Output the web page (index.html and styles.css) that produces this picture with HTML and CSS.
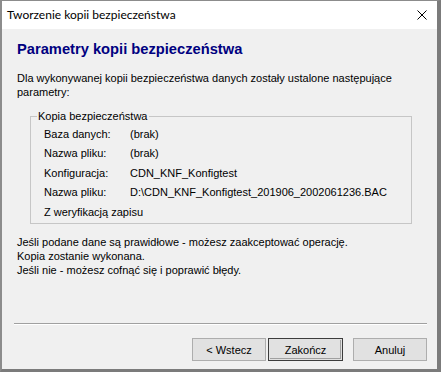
FILE: index.html
```html
<!DOCTYPE html>
<html lang="pl">
<head>
<meta charset="utf-8">
<title>Tworzenie kopii bezpieczeństwa</title>
<link rel="stylesheet" href="styles.css">
</head>
<body>
<div class="window">
  <div class="titlebar">
    <span class="title">Tworzenie kopii bezpieczeństwa</span>
    <span class="close" aria-label="Zamknij">
      <svg width="10" height="10" viewBox="0 0 10 10"><path d="M0.5 0.5 L9.5 9.5 M9.5 0.5 L0.5 9.5" stroke="#000" stroke-width="1" fill="none"/></svg>
    </span>
  </div>
  <div class="content">
    <h1 class="heading">Parametry kopii bezpieczeństwa</h1>
    <p class="intro">Dla wykonywanej kopii bezpieczeństwa danych zostały ustalone następujące parametry:</p>
    <fieldset class="group">
      <legend class="legend">Kopia bezpieczeństwa</legend>
      <div class="rows">
        <span class="label">Baza danych:</span><span class="value">(brak)</span>
        <span class="label">Nazwa pliku:</span><span class="value">(brak)</span>
        <span class="label">Konfiguracja:</span><span class="value">CDN_KNF_Konfigtest</span>
        <span class="label">Nazwa pliku:</span><span class="value">D:\CDN_KNF_Konfigtest_201906_2002061236.BAC</span>
        <span class="label full">Z weryfikacją zapisu</span>
      </div>
    </fieldset>
    <p class="outro">Jeśli podane dane są prawidłowe - możesz zaakceptować operację.<br>Kopia zostanie wykonana.<br>Jeśli nie - możesz cofnąć się i poprawić błędy.</p>
    <div class="spacer"></div>
    <div class="separator"></div>
    <div class="buttons">
      <button class="btn">&lt; Wstecz</button>
      <button class="btn default">Zakończ</button>
      <button class="btn cancel">Anuluj</button>
    </div>
  </div>
</div>
</body>
</html>
```
FILE: styles.css
```css
html, body {
  margin: 0;
  padding: 0;
}
body {
  width: 441px;
  height: 372px;
  overflow: hidden;
  font-family: "Liberation Sans", Arial, sans-serif;
  font-size: 11px;
  color: #000;
}
.window {
  box-sizing: border-box;
  width: 441px;
  height: 372px;
  border-top: 1px solid #8c8c8c;
  border-left: 2px solid #8c8c8c;
  border-right: 4px solid #7b7b7b;
  border-bottom: 3px solid #7b7b7b;
  background: #f0f0f0;
  display: flex;
  flex-direction: column;
}
.titlebar {
  height: 28px;
  background: #fff;
  display: flex;
  align-items: center;
  justify-content: space-between;
  padding: 0 10px 0 5px;
  flex: none;
}
.title {
  font-family: Lato, "Noto Sans", sans-serif;
  font-size: 12px;
  color: #000;
  margin-top: -1px;
}
.close {
  display: flex;
  width: 10px;
  height: 10px;
  margin-top: -1px;
}
.content {
  flex: 1;
  display: flex;
  flex-direction: column;
  padding: 0 10px 0 12px;
}
.heading {
  margin: 11px 0 0 3px;
  font-size: 14.7px;
  line-height: 18px;
  font-weight: bold;
  color: #000080;
}
.intro {
  margin: 13px 0 0 3px;
  line-height: 14px;
  width: 400px;
}
.group {
  margin: 11px 0 0 16px;
  width: 382px;
  box-sizing: border-box;
  border: 1px solid #c6c6c6;
  padding: 4px 0 1px 13px;
  min-width: 0;
}
.legend {
  padding: 0 2px 0 1px;
  margin-left: -7px;
  line-height: 13px;
}
.rows {
  display: grid;
  grid-template-columns: 86px auto;
  grid-auto-rows: 19.5px;
  align-items: center;
  margin-top: -3px;
}
.full {
  grid-column: 1 / span 2;
}
.outro {
  margin: 11px 0 0 3px;
  line-height: 14px;
}
.spacer {
  flex: 1;
}
.separator {
  height: 0;
  border-top: 1px solid #a0a0a0;
  border-bottom: 1px solid #fff;
  margin: 0;
}
.buttons {
  display: flex;
  justify-content: flex-end;
  margin-top: 13px;
  margin-bottom: 8px;
}
.btn {
  font-family: "Liberation Sans", Arial, sans-serif;
  font-size: 11px;
  color: #000;
  width: 74px;
  height: 23px;
  box-sizing: border-box;
  background: #e1e1e1;
  border: 1px solid #adadad;
  padding: 0;
  margin: 0;
}
.btn + .btn {
  margin-left: 2px;
}
.btn.cancel {
  margin-left: 10px;
}
.btn.default {
  width: 75px;
  border: 1px solid #3c3c3c;
  box-shadow: inset 0 0 0 1px #e1e1e1, inset -1px -1px 0 1px #a0a0a0;
}
```
